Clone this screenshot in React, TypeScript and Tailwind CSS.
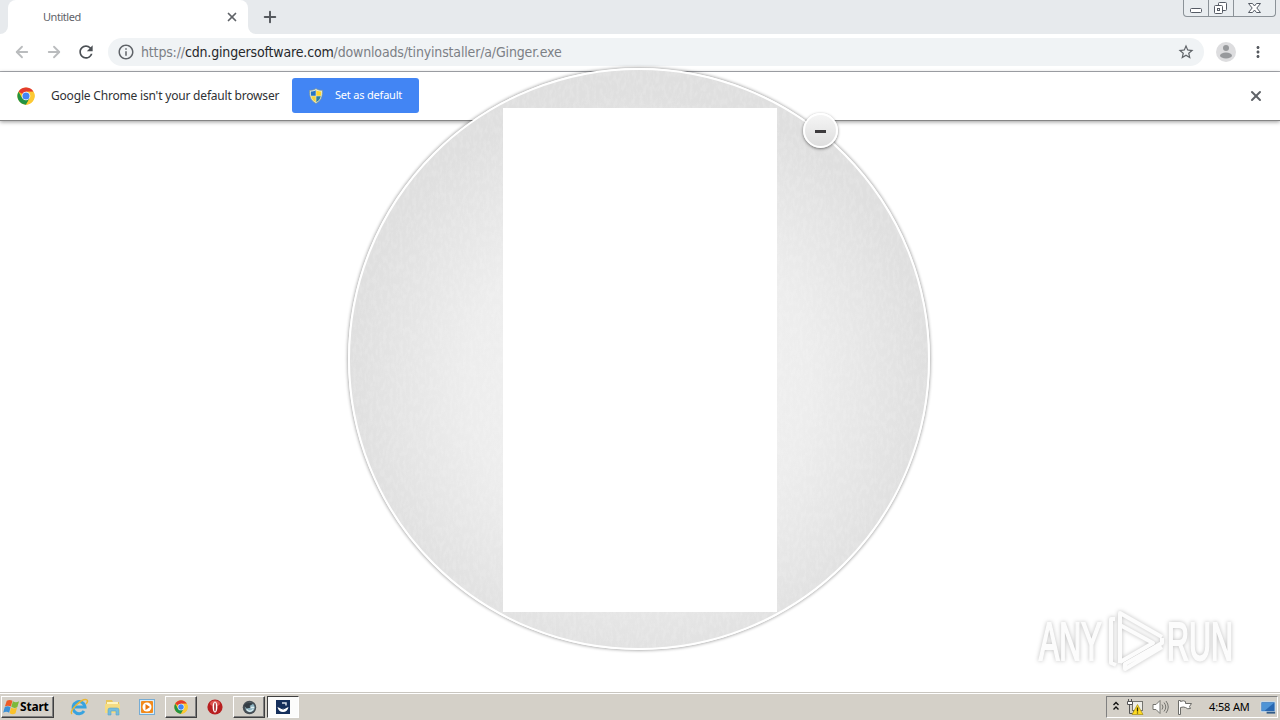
import type { ReactNode } from "react";
import { ArrowLeft, ArrowRight, Plus, X } from "lucide-react";
import { MdRefresh, MdInfoOutline, MdStarBorder, MdMoreVert } from "react-icons/md";

function ChromeLogo({ className }: { className?: string }) {
    return (
        <svg viewBox="0 0 48 48" className={className}>
            <circle cx="24" cy="24" r="23" fill="#fbc116" />
            <path d="M24 24 4.1 12.5A23 23 0 0 1 43.9 12.5H24z" fill="#e33b2e" />
            <path d="M4.1 12.5A23 23 0 0 0 24 47L34 30 24 24 14 30z" fill="#229342" />
            <path d="M24 12.5h19.9A23 23 0 0 1 24 47l10-17z" fill="#fcc934" />
            <circle cx="24" cy="24" r="11.5" fill="#fff" />
            <circle cx="24" cy="24" r="9.5" fill="#4285f4" />
        </svg>
    );
}

function Shield() {
    return (
        <svg viewBox="0 0 16 16" className="h-4 w-4 shrink-0">
            <path d="M8 .5C6 2 4 2.3 1.5 2.3c0 6 .8 10 6.5 13.2 5.7-3.2 6.5-7.2 6.5-13.2C12 2.3 10 2 8 .5z" fill="#e6ecd9" stroke="#7a918f" strokeWidth=".7" />
            <path d="M7.7 2.2C6 3.2 4.5 3.6 2.8 3.6c0 1.6.1 3 .3 4.2h4.6z" fill="#2674c5" />
            <path d="M8.3 2.2c1.7 1 3.2 1.4 4.9 1.4 0 1.6-.1 3-.3 4.2H8.3z" fill="#ffd52d" />
            <path d="M7.7 8.2H3.2c.6 2.7 1.9 4.5 4.5 6z" fill="#f5d43c" />
            <path d="M8.3 8.2h4.5c-.6 2.7-1.9 4.5-4.5 6z" fill="#2f7fa0" />
        </svg>
    );
}

function WindowControls() {
    return (
        <div className="mr-1 flex h-[17px] w-[93px] shrink-0 rounded-b-[4px] border border-t-0 border-[#8b9298] bg-[#e9edf0]">
            <div className="w-[25px] border-r border-[#8b9298]">
                <svg viewBox="0 0 24 16" className="h-4 w-6">
                    <rect x="6.5" y="8.5" width="11" height="4" rx="1" fill="#fff" stroke="#555b65" />
                </svg>
            </div>
            <div className="w-[25px] border-r border-[#8b9298]">
                <svg viewBox="0 0 24 16" className="h-4 w-6" fill="#fff" stroke="#555b65">
                    <rect x="9.5" y="2.5" width="8" height="8" rx="1" />
                    <rect x="5.5" y="5.5" width="8" height="8" rx="1" />
                    <rect x="8.5" y="8.5" width="2" height="2" />
                </svg>
            </div>
            <svg viewBox="0 0 41 16" className="h-4 w-[41px]">
                <path d="M14.5 3.5h4l2 2.5 2-2.5h4L22.8 8l3.7 4.5h-4l-2-2.5-2 2.5h-4L18.2 8z" fill="#fff" stroke="#555b65" />
            </svg>
        </div>
    );
}

function TabStrip() {
    return (
        <div className="flex h-[34px] shrink-0 bg-[#e7eaed]">
            <div className="w-2 shrink-0 bg-white">
                <div className="h-full rounded-br-lg bg-[#e7eaed]" />
            </div>
            <div className="flex w-[240px] items-center justify-between rounded-t-lg bg-white pr-[9px] pl-[35px] text-[#5f6368]">
                <span className="text-[11px] tracking-[-0.45px]">Untitled</span>
                <X className="h-[14px] w-[14px]" strokeWidth={3} />
            </div>
            <div className="w-2 shrink-0 bg-white">
                <div className="h-full rounded-bl-lg bg-[#e7eaed]" />
            </div>
            <Plus className="mt-2 ml-[5px] h-[18px] w-[18px] text-[#55595e]" strokeWidth={2.6} />
            <div className="grow" />
            <WindowControls />
        </div>
    );
}

function Toolbar() {
    return (
        <div className="flex h-[38px] shrink-0 items-center border-b border-[#abadb2] bg-white pb-px pl-[13px]">
            <ArrowLeft className="h-[18px] w-[18px] text-[#babcbe]" strokeWidth={2.4} />
            <ArrowRight className="ml-[14px] h-[18px] w-[18px] text-[#babcbe]" strokeWidth={2.4} />
            <MdRefresh className="ml-[13px] h-[20px] w-[20px] text-[#4c5055]" />
            <div className="ml-3 flex h-7 w-[1096px] items-center rounded-full bg-[#f0f3f5] pr-[9px] pl-[9px]">
                <MdInfoOutline className="h-[18px] w-[18px] text-[#5f6368]" />
                <span className="ml-[6px] font-[family-name:DejaVu_Sans] text-[14px] tracking-[-0.16px] whitespace-nowrap text-[#7c8085] font-stretch-condensed">
                    https://<span className="text-[#26282b]">cdn.gingersoftware.com</span>/downloads/tinyinstaller/a/Ginger.exe
                </span>
                <div className="grow" />
                <MdStarBorder className="h-[18px] w-[18px] text-[#5f6368]" />
            </div>
            <svg viewBox="0 0 20 20" className="ml-3 h-5 w-5">
                <circle cx="10" cy="10" r="10" fill="#dddddf" />
                <circle cx="10" cy="6" r="3" fill="#97999c" />
                <ellipse cx="10" cy="13.5" rx="6" ry="3" fill="#97999c" />
            </svg>
            <MdMoreVert className="ml-[13px] h-[18px] w-[18px] text-[#55595e]" />
        </div>
    );
}

function DefaultBrowserBar() {
    return (
        <div className="relative flex h-[49px] shrink-0 items-center border-b border-[#858585] bg-white pr-4 pb-px pl-[17px] shadow-[0_1px_4px_rgba(0,0,0,0.4)]">
            <ChromeLogo className="h-[18px] w-[18px] shrink-0" />
            <span className="ml-4 w-[241px] text-[12px] tracking-[-0.19px] whitespace-nowrap text-[#303134]">
                Google Chrome isn't your default browser
            </span>
            <button className="flex h-[35px] w-[127px] items-center rounded-[3px] bg-[#4285f4] pl-4 text-white">
                <Shield />
                <span className="ml-[11px] text-[11px] tracking-[-0.2px] whitespace-nowrap">Set as default</span>
            </button>
            <div className="grow" />
            <X className="h-4 w-4 text-[#5f6368]" strokeWidth={3} />
        </div>
    );
}

function InstallerDisc() {
    return (
        <div className="absolute top-[68px] left-[348px] h-[582px] w-[582px]">
            <div className="flex h-full w-full items-center justify-center overflow-hidden rounded-full border-2 border-white bg-[radial-gradient(circle_at_50%_54%,#f3f3f3_0%,#ededed_40%,#dfdfdf_68%)] shadow-[0_0_3px_1px_rgba(0,0,0,0.3)]">
                <svg className="absolute inset-[2px] h-[578px] w-[578px] rounded-full opacity-[0.14]">
                    <filter id="paper">
                        <feTurbulence type="fractalNoise" baseFrequency="0.3 0.14" numOctaves="3" seed="4" />
                        <feColorMatrix values="0 0 0 0 1  0 0 0 0 1  0 0 0 0 1  3 0 0 0 -1.2" />
                    </filter>
                    <rect width="578" height="578" filter="url(#paper)" />
                </svg>
                <div className="relative mt-[2px] ml-[2px] h-[504px] w-[274px] shrink-0 bg-white" />
            </div>
            <button className="absolute top-[45px] left-[455px] flex h-[35px] w-[35px] items-center justify-center rounded-full border-2 border-white bg-linear-to-b from-[#f5f5f5] to-[#dedede] shadow-[0_1px_3px_rgba(0,0,0,0.5)]">
                <span className="mt-[2px] h-[3px] w-[11px] bg-[#3c3a3c]" />
            </button>
        </div>
    );
}

function Watermark() {
    return (
        <svg viewBox="0 0 230 74" className="absolute top-[604px] left-[1030px] h-[74px] w-[230px] overflow-visible drop-shadow-[0_0_2px_rgba(0,0,0,0.26)]">
            <g fontFamily="Liberation Sans, sans-serif" fontSize="54" fill="#fcfcfc" stroke="#fcfcfc" strokeWidth="2">
                <text transform="translate(9 56) scale(.565 1)">ANY</text>
                <text transform="translate(137 56) scale(.565 1)">RUN</text>
            </g>
            <g fill="none" stroke="#fcfcfc" strokeWidth="4" strokeLinejoin="round">
                <path d="M90 59V9l42 24" />
                <path d="M85 15h-4v44l5 2" />
                <path d="M90 21l33 18-33 19" />
                <path d="M132 34v5L95 60v5l37-22" />
            </g>
        </svg>
    );
}

function TaskButton({ children, pressed }: { children: ReactNode; pressed?: boolean }) {
    const look = pressed
        ? "bg-[#fcfcfb] border-t-[#404040] border-l-[#404040] border-b-white border-r-white"
        : "bg-[#d4d0c8] border-t-white border-l-white border-b-[#404040] border-r-[#404040] shadow-[inset_-1px_-1px_0_#808080]";
    return <div className={`flex h-[22px] w-8 shrink-0 items-center justify-center border ${look}`}>{children}</div>;
}

function WindowsFlag() {
    return (
        <svg viewBox="0 0 18 16" className="h-4 w-[17px] shrink-0">
            <path d="M4 1.5q3-2 6 0L8.4 7.5Q5 5.7 2 7.5z" fill="#ee5b27" />
            <path d="M10.5 2q3 2 6.5 0L15.2 8q-3 2-6.4-.2z" fill="#7db93b" />
            <path d="M1.8 8.2q3-1.9 6.2 0L6.5 14q-3-2-6.3 0z" fill="#3c91d7" />
            <path d="M8.5 8.6q3 2 6.4 0L13.3 14.7q-3 2-6.3-.2z" fill="#fac22b" />
        </svg>
    );
}

function ExplorerIcon() {
    return (
        <svg viewBox="0 0 20 20" className="h-5 w-5">
            <path d="M15 14a6 6 0 1 1 1-4H6" fill="none" stroke="#38a3df" strokeWidth="3" />
            <path d="M3 17C-1 14 14 0 18 3c1 1 0 3-1 4" fill="none" stroke="#eab631" strokeWidth="1.4" />
        </svg>
    );
}

function FolderIcon() {
    return (
        <svg viewBox="0 0 20 20" className="h-5 w-5">
            <path d="M3 3h6l1 2h6v10H3z" fill="#e8c65d" />
            <path d="M4 5h11v8H4z" fill="#fff5bf" />
            <path d="M2 7h15v9H2z" fill="#f5dc83" />
            <path d="M5 18v-5q0-2 2-2h7q2 0 2 2v5h-3v-4H8v4z" fill="#76bddd" stroke="#5da4c7" strokeWidth=".6" />
        </svg>
    );
}

function MediaIcon() {
    return (
        <svg viewBox="0 0 18 18" className="ml-px h-[18px] w-[18px]">
            <rect x="1.5" y="1.5" width="15" height="15" fill="#d7edfb" stroke="#76acd4" />
            <rect x="3" y="3" width="12" height="12" rx="1" fill="#f28a1c" />
            <circle cx="9" cy="9" r="4.5" fill="#fff" />
            <path d="M7.5 6v6l4.5-3z" fill="#e8740e" />
        </svg>
    );
}

function OperaIcon() {
    return (
        <svg viewBox="0 0 16 16" className="h-4 w-4">
            <circle cx="8" cy="8" r="7.6" fill="#b81f20" />
            <ellipse cx="8" cy="4.5" rx="5" ry="3" fill="#dd5550" />
            <ellipse cx="8" cy="8" rx="2.4" ry="5.5" fill="#fff" />
            <ellipse cx="8" cy="8" rx=".8" ry="4.5" fill="#9e1717" />
        </svg>
    );
}

function GlobeIcon() {
    return (
        <svg viewBox="0 0 16 16" className="h-[15px] w-[15px]">
            <circle cx="8" cy="8" r="7.2" fill="#464e54" />
            <circle cx="8.5" cy="8" r="5" fill="#8fb6c3" />
            <path d="M2 5.5q5-4 10-1.5L8 6.5l2 1.5-5 1z" fill="#343d44" />
            <path d="M5 10q3 4 7 0M9 8h4" stroke="#dfeff2" strokeWidth="1.5" fill="none" />
        </svg>
    );
}

function InstallerIcon() {
    return (
        <svg viewBox="0 0 16 16" className="h-4 w-4">
            <rect x="1" y="1" width="14" height="14" fill="#152f5b" />
            <path d="M2.5 8q5.5 3.5 11 0-1 5-5.5 5T2.5 8z" fill="#fff" />
            <path d="M5.5 9q2.5 2.5 5.5-.5" fill="none" stroke="#152f5b" />
            <path d="M7 4h4v2.5" fill="none" stroke="#d7dfea" strokeWidth="1.5" />
        </svg>
    );
}

function Tray() {
    return (
        <div className="mr-[2px] flex h-[22px] w-[172px] items-center border border-t-[#808080] border-r-white border-b-white border-l-[#808080] text-black">
            <svg viewBox="0 0 8 10" className="mb-[2px] ml-[5px] h-[10px] w-2 shrink-0" fill="none" stroke="#111" strokeWidth="1.4">
                <path d="m1.5 4 2.5-2.5L6.5 4M1.5 8.5 4 6l2.5 2.5" />
            </svg>
            <svg viewBox="0 0 18 18" className="ml-[6px] mr-[2px] h-[18px] w-[18px] shrink-0">
                <rect x="6.5" y="3.5" width="10" height="9" fill="#eeeee9" stroke="#74746f" />
                <path d="M2.5 1v3M5.5 1v3" stroke="#555" />
                <path d="M1.5 3.5h5v3h-5z" fill="#fff" stroke="#555" />
                <path d="M3.5 7v8.5h4v-3" fill="none" stroke="#555" />
                <path d="m11.5 6.5 5.5 10H6z" fill="#ffdb21" stroke="#a58b15" strokeWidth=".7" />
                <path d="M11.5 9.5v4m0 1v1" stroke="#332b05" strokeWidth="1.3" />
            </svg>
            <svg viewBox="0 0 18 18" className="ml-[5px] h-[18px] w-[18px] shrink-0" stroke="#74746f" fill="none">
                <path d="M2 6.5h3l4-4v13l-4-4H2z" fill="#fff" />
                <path d="M11 6.5q2 2.5 0 5M13 4.5q3.5 4.5 0 9M15 3q4.5 6 0 12" />
            </svg>
            <svg viewBox="0 0 18 18" className="ml-[7px] h-[18px] w-[18px] shrink-0" fill="#fff" stroke="#6c6c68">
                <path d="M2.5 2.5h2v1q3-1.5 5 0v2h6l-2 3 1 2q-3 1-5-1-2-1-5 0v7h-2z" />
            </svg>
            <span className="ml-[15px] w-[43px] text-[11px] tracking-[-0.15px] whitespace-nowrap">4:58 AM</span>
            <svg viewBox="0 0 18 16" className="ml-2 h-4 w-[17px] shrink-0">
                <path d="M1 2.5h15v10.5H1z" fill="#2867b1" stroke="#d7e7f1" />
                <path d="M2 3.5h13L5 12H2z" fill="#4e94d6" />
                <path d="M7 13h9v2H7z" fill="#315b88" />
            </svg>
        </div>
    );
}

function Taskbar() {
    return (
        <div className="relative flex h-7 shrink-0 items-center border-t border-[#c9c6c0] bg-[#d4d0c8] pt-px pl-px shadow-[inset_0_1px_0_#fff]">
            <div className="flex h-[22px] w-[53px] shrink-0 items-center border border-t-white border-r-[#404040] border-b-[#404040] border-l-white pl-px shadow-[inset_-1px_-1px_0_#808080]">
                <WindowsFlag />
                <span className="text-[12px] font-bold tracking-[-0.2px] text-black">Start</span>
            </div>
            <div className="ml-[15px] flex w-[96px] items-center gap-[14px]">
                <ExplorerIcon />
                <FolderIcon />
                <MediaIcon />
            </div>
            <TaskButton><ChromeLogo className="h-[14px] w-[14px]" /></TaskButton>
            <div className="mr-[10px] ml-[10px]"><OperaIcon /></div>
            <TaskButton><GlobeIcon /></TaskButton>
            <div className="ml-[2px]"><TaskButton pressed><InstallerIcon /></TaskButton></div>
            <div className="grow" />
            <Tray />
        </div>
    );
}

export default function App() {
    return (
        <div className="relative flex h-[720px] w-[1280px] flex-col overflow-hidden bg-white font-['Noto_Sans',sans-serif]">
            <TabStrip />
            <Toolbar />
            <DefaultBrowserBar />
            <main className="grow bg-white" />
            <Taskbar />
            <InstallerDisc />
            <Watermark />
        </div>
    );
}
